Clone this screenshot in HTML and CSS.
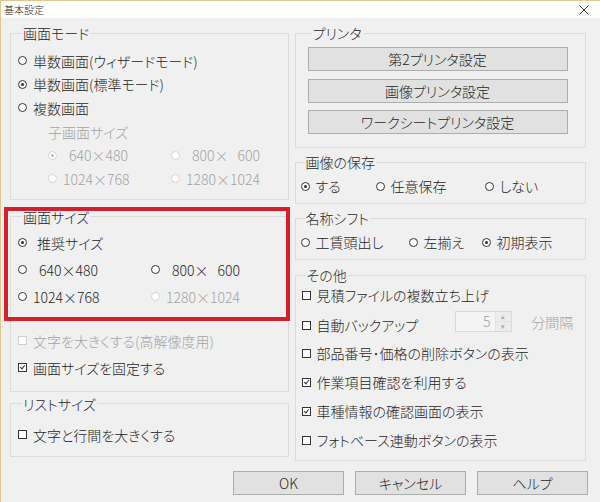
FILE: index.html
```html
<!DOCTYPE html>
<html lang="ja">
<head>
  <meta charset="UTF-8">
  <title>基本設定</title>
  <link rel="stylesheet" href="styles.css">
</head>
<body>
  <div class="window">
    <div class="titlebar">
      <span>基本設定</span>
      <svg class="close" width="10" height="10" viewBox="0 0 10 10"><path d="M0.5 0.5L9.5 9.5M9.5 0.5L0.5 9.5" stroke="#333" stroke-width="1"/></svg>
    </div>

    <div class="client">
      <div class="columns">
        <div class="col left">
          <fieldset class="g-mode">
            <legend>画面モード</legend>
            <div class="row r-mode"><span class="radio"></span><span>単数画面(ウィザードモード)</span></div>
            <div class="row r-mode"><span class="radio on"></span><span>単数画面(標準モード)</span></div>
            <div class="row r-mode"><span class="radio"></span><span>複数画面</span></div>
            <div class="row r-mode sub dim">子画面サイズ</div>
            <div class="row r-mode sub pair sub-pair dim">
              <div class="opt"><span class="radio off on"></span><span class="sp">640×480</span></div>
              <div class="opt"><span class="radio off"></span><span class="sp">800×<span class="num-gap">600</span></span></div>
            </div>
            <div class="row r-mode sub pair sub-pair dim">
              <div class="opt"><span class="radio off"></span><span>1024×768</span></div>
              <div class="opt"><span class="radio off"></span><span>1280×1024</span></div>
            </div>
          </fieldset>

          <fieldset class="g-size">
            <legend>画面サイズ</legend>
            <div class="row r-size"><span class="radio on"></span><span class="sp2">推奨サイズ</span></div>
            <div class="row r-size pair size-pair">
              <div class="opt"><span class="radio"></span><span class="sp">640×480</span></div>
              <div class="opt"><span class="radio"></span><span class="sp">800×<span class="num-gap">600</span></span></div>
            </div>
            <div class="row r-size pair size-pair">
              <div class="opt"><span class="radio"></span><span>1024×768</span></div>
              <div class="opt dim"><span class="radio off"></span><span>1280×1024</span></div>
            </div>
            <div class="row r-size dim push"><span class="check off"></span><span>文字を大きくする(高解像度用)</span></div>
            <div class="row r-size"><span class="check on"></span><span>画面サイズを固定する</span></div>
          </fieldset>

          <fieldset class="g-list">
            <legend>リストサイズ</legend>
            <div class="row r-size"><span class="check"></span><span>文字と行間を大きくする</span></div>
          </fieldset>

          <div class="highlight"></div>
        </div>

        <div class="col right">
          <fieldset class="g-printer">
            <legend>プリンタ</legend>
            <div class="btn wide">第2プリンタ設定</div>
            <div class="btn wide">画像プリンタ設定</div>
            <div class="btn wide">ワークシートプリンタ設定</div>
          </fieldset>

          <fieldset class="g-small">
            <legend>画像の保存</legend>
            <div class="row r-small save-row">
              <div class="opt"><span class="radio on"></span><span>する</span></div>
              <div class="opt"><span class="radio"></span><span>任意保存</span></div>
              <div class="opt"><span class="radio"></span><span>しない</span></div>
            </div>
          </fieldset>

          <fieldset class="g-small">
            <legend>名称シフト</legend>
            <div class="row r-small name-row">
              <div class="opt"><span class="radio"></span><span>工賃頭出し</span></div>
              <div class="opt"><span class="radio"></span><span>左揃え</span></div>
              <div class="opt"><span class="radio on"></span><span>初期表示</span></div>
            </div>
          </fieldset>

          <fieldset class="g-other">
            <legend>その他</legend>
            <div class="row r-other first"><span class="check"></span><span>見積ファイルの複数立ち上げ</span></div>
            <div class="row r-other backup">
              <div class="opt"><span class="check"></span><span>自動バックアップ</span></div>
              <div class="spin">
                <span class="spin-value">5</span>
                <span class="spin-btns"><span>▴</span><span>▾</span></span>
              </div>
              <span class="dim unit">分間隔</span>
            </div>
            <div class="row r-other"><span class="check"></span><span>部品番号･価格の削除ボタンの表示</span></div>
            <div class="row r-other"><span class="check on"></span><span>作業項目確認を利用する</span></div>
            <div class="row r-other"><span class="check on"></span><span>車種情報の確認画面の表示</span></div>
            <div class="row r-other"><span class="check"></span><span>フォトベース連動ボタンの表示</span></div>
          </fieldset>
        </div>
      </div>

      <div class="buttons">
        <div class="btn">OK</div>
        <div class="btn">キャンセル</div>
        <div class="btn">ヘルプ</div>
      </div>
    </div>
  </div>
</body>
</html>
```

FILE: styles.css
```css
body {
  margin: 0;
  width: 600px;
  height: 502px;
  overflow: hidden;
  background-color: #f0f0f0;
  font-family: "Noto Sans CJK JP", "Noto Sans", sans-serif;
  font-size: 14px;
  font-weight: 300;
  color: #262626;
  font-feature-settings: "palt";
}

.window {
  height: 502px;
  box-sizing: border-box;
  border-left: 1px solid #e3c68e; /* window accent */
}

.titlebar {
  height: 17px;
  border-top: 1px solid #e3c68e;
  background-color: #fff;
  display: flex;
  align-items: center;
  justify-content: space-between;
  padding: 0 11px 0 3px;
  font-size: 10px;
  line-height: 10px;
}

.client {
  padding: 6px 14px 0 9px;
}

.columns {
  display: flex;
  gap: 6px;
}

.col {
  display: flex;
  flex-direction: column;
}

.left {
  width: 279px;
  position: relative;
}

.right {
  width: 292px;
}

fieldset {
  margin: 0;
  border: 1px solid #dcdcdc;
  padding: 0 0 0 7px;
  min-width: 0;
}

legend {
  padding: 0 1px;
  margin-left: 4px;
  line-height: 18px;
}

.row {
  display: flex;
  align-items: center;
  gap: 6px;
  white-space: nowrap;
}

.opt {
  display: flex;
  align-items: center;
  gap: 6px;
}

.dim {
  color: #a3a3a3;
}

/* radio + checkbox glyphs */
.radio {
  width: 9px;
  height: 9px;
  box-sizing: border-box;
  border: 1px solid #333;
  border-radius: 50%;
  background-color: #fff;
  display: flex;
  align-items: center;
  justify-content: center;
  flex: none;
}

.radio.on::after {
  content: "";
  width: 3px;
  height: 3px;
  border-radius: 50%;
  background-color: #333;
}

.radio.off {
  border-color: #d4d4d4;
}

.radio.off.on::after {
  background-color: #bcbcbc;
}

.check {
  width: 9px;
  height: 9px;
  box-sizing: border-box;
  border: 1px solid #333;
  background-color: #fff;
  position: relative;
  flex: none;
}

.check.off {
  border-color: #cfcfcf;
}

.check.on::after {
  content: "";
  position: absolute;
  left: 2px;
  top: 0px;
  width: 2px;
  height: 4px;
  border-right: 1px solid #333;
  border-bottom: 1px solid #333;
  transform: rotate(40deg);
}

.sp {
  padding-left: 6px;
}

.sp2 {
  padding-left: 4px;
}

.num-gap {
  padding-left: 9px;
}

/* 画面モード */
.g-mode {
  padding-top: 7px;
  padding-bottom: 8px;
}

.r-mode {
  height: 23.6px;
}

.sub {
  padding-left: 30px;
}

.pair {
  display: grid;
}

.sub-pair {
  grid-template-columns: 117px auto;
}

.size-pair {
  grid-template-columns: 127px auto;
}

/* 画面サイズ */
.g-size {
  margin-top: 8px;
  padding-top: 3.5px;
  padding-bottom: 9.5px;
}

.r-size {
  height: 27px;
}

.push {
  margin-top: 17px;
}

.g-list {
  margin-top: 3px;
  padding-top: 8.5px;
  padding-bottom: 8px;
}

.highlight {
  position: absolute;
  left: -6px;
  top: 183px;
  width: 286px;
  height: 114px;
  box-sizing: border-box;
  border: 4px solid #d3202e;
}

/* right column */
.g-printer {
  padding: 5px 0 13px 12px;
  display: flex;
  flex-direction: column;
  gap: 7.5px;
}

.btn {
  height: 24px;
  box-sizing: border-box;
  border: 1px solid #adadad;
  background-color: #e1e1e1;
  display: flex;
  align-items: center;
  justify-content: center;
  width: 111px;
}

.btn.wide {
  width: 260px;
}

.g-small {
  margin-top: 5px;
  padding: 3px 0 5px 5px;
}

.r-small {
  height: 24px;
}

.save-row {
  display: grid;
  grid-template-columns: 75px 109px auto;
  gap: 0;
}

.name-row {
  display: grid;
  grid-template-columns: 108px 73px auto;
  gap: 0;
}

.g-other {
  margin-top: 6px;
  padding: 0 0 7px 6px;
  display: flex;
  flex-direction: column;
  gap: 3px;
}

.r-other {
  height: 26px;
}

.r-other.first {
  margin-top: -2px;
}

.backup {
  display: grid;
  grid-template-columns: 153px auto auto;
  gap: 0;
}

.spin {
  width: 57px;
  height: 21px;
  box-sizing: border-box;
  border: 1px solid #d9d9d9;
  background-color: #f4f4f4;
  display: flex;
  align-items: stretch;
  margin-bottom: 7px;
}

.spin-value {
  flex: 1;
  text-align: right;
  color: #a3a3a3;
  padding-right: 4px;
  line-height: 19px;
}

.spin-btns {
  width: 15px;
  display: flex;
  flex-direction: column;
  border-left: 1px solid #e2e2e2;
}

.spin-btns span {
  flex: 1;
  font-size: 7px;
  line-height: 9px;
  color: #aaa;
  text-align: center;
  background-color: #ececec;
}

.spin-btns span + span {
  border-top: 1px solid #e2e2e2;
}

.unit {
  padding-left: 8px;
  margin-bottom: 7px;
}

.buttons {
  display: flex;
  justify-content: flex-end;
  gap: 11px;
  margin-top: 10px;
  margin-right: -2px;
}
```
